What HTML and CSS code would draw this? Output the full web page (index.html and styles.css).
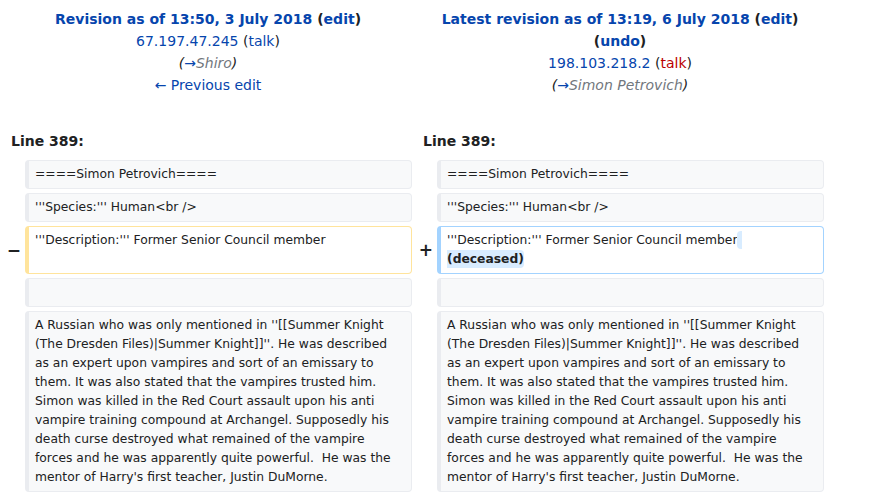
FILE: index.html
```html
<!DOCTYPE html>
<html lang="en">
<head>
<meta charset="utf-8">
<title>Difference between revisions</title>
<link rel="stylesheet" href="styles.css">
</head>
<body>
<table class="diff">
  <colgroup>
    <col class="col-marker">
    <col class="col-content">
    <col class="col-marker">
    <col class="col-content">
  </colgroup>
  <tr class="diff-title">
    <td colspan="2" class="diff-otitle">
      <div class="rev-line"><strong><a href="#">Revision as of 13:50, 3 July 2018</a> <span class="paren">(<a href="#">edit</a>)</span></strong></div>
      <div><a href="#">67.197.47.245</a> <span class="paren">(<a href="#">talk</a>)</span></div>
      <div class="comment">(<a href="#">→</a><span class="autocomment">Shiro</span>)</div>
      <div><a href="#">← Previous edit</a></div>
    </td>
    <td colspan="2" class="diff-ntitle">
      <div class="rev-line"><strong><a href="#">Latest revision as of 13:19, 6 July 2018</a> <span class="paren">(<a href="#">edit</a>)</span> <span class="paren">(<a href="#">undo</a>)</span></strong></div>
      <div><a href="#">198.103.218.2</a> <span class="paren">(<a href="#" class="new">talk</a>)</span></div>
      <div class="comment">(<a href="#">→</a><span class="autocomment">Simon Petrovich</span>)</div>
    </td>
  </tr>
  <tr>
    <td colspan="2" class="diff-lineno">Line 389:</td>
    <td colspan="2" class="diff-lineno">Line 389:</td>
  </tr>
  <tr>
    <td class="diff-marker"></td>
    <td class="diff-content diff-context"><div>====Simon Petrovich====</div></td>
    <td class="diff-marker"></td>
    <td class="diff-content diff-context"><div>====Simon Petrovich====</div></td>
  </tr>
  <tr>
    <td class="diff-marker"></td>
    <td class="diff-content diff-context"><div>'''Species:''' Human&lt;br /&gt;</div></td>
    <td class="diff-marker"></td>
    <td class="diff-content diff-context"><div>'''Species:''' Human&lt;br /&gt;</div></td>
  </tr>
  <tr>
    <td class="diff-marker">−</td>
    <td class="diff-content diff-deletedline"><div>'''Description:''' Former Senior Council member</div></td>
    <td class="diff-marker diff-marker-new">+</td>
    <td class="diff-content diff-addedline"><div>'''Description:''' Former Senior Council member<ins class="diffchange"> (deceased)</ins></div></td>
  </tr>
  <tr>
    <td class="diff-marker"></td>
    <td class="diff-content diff-context"><br></td>
    <td class="diff-marker"></td>
    <td class="diff-content diff-context"><br></td>
  </tr>
  <tr>
    <td class="diff-marker"></td>
    <td class="diff-content diff-context"><div>A Russian who was only mentioned in ''[[Summer Knight (The Dresden Files)|Summer Knight]]''. He was described as an expert upon vampires and sort of an emissary to them. It was also stated that the vampires trusted him. Simon was killed in the Red Court assault upon his anti vampire training compound at Archangel. Supposedly his death curse destroyed what remained of the vampire forces and he was apparently quite powerful.  He was the mentor of Harry's first teacher, Justin DuMorne.</div></td>
    <td class="diff-marker"></td>
    <td class="diff-content diff-context"><div>A Russian who was only mentioned in ''[[Summer Knight (The Dresden Files)|Summer Knight]]''. He was described as an expert upon vampires and sort of an emissary to them. It was also stated that the vampires trusted him. Simon was killed in the Red Court assault upon his anti vampire training compound at Archangel. Supposedly his death curse destroyed what remained of the vampire forces and he was apparently quite powerful.  He was the mentor of Harry's first teacher, Justin DuMorne.</div></td>
  </tr>
</table>
</body>
</html>
```

FILE: styles.css
```css
html, body {
  margin: 0;
  padding: 0;
  background: #ffffff;
}

body {
  font-family: "DejaVu Sans", sans-serif;
  color: #202122;
  font-size: 14px;
}

a {
  color: #0645ad;
  text-decoration: none;
}

a.new {
  color: #ba0000;
}

.diff {
  width: 828px;
  table-layout: fixed;
  border-collapse: separate;
  border-spacing: 4px;
  margin: 0;
}

.col-marker {
  width: 17px;
}

.col-content {
  width: 387px;
}

.diff td {
  padding: 0;
}

.diff .diff-otitle,
.diff .diff-ntitle {
  text-align: center;
  vertical-align: top;
  line-height: 22px;
  font-size: 14px;
  padding-top: 4px;
}

.paren {
  color: #202122;
}

.comment {
  font-style: italic;
  color: #202122;
}

.autocomment {
  color: #72777d;
}

.diff .diff-lineno {
  font-weight: bold;
  font-size: 14px;
  line-height: 22px;
  padding: 30px 0 4px 7px;
  text-align: left;
}

.diff .diff-marker {
  text-align: right;
  vertical-align: middle;
  font-weight: bold;
  font-size: 17px;
  line-height: 1;
  padding-right: 0;
}

.diff .diff-content {
  vertical-align: top;
  font-size: 12.32px;
  line-height: 19px;
  padding: 4px 12px 4px 6px;
  white-space: pre-wrap;
  overflow-wrap: break-word;
  border-style: solid;
  border-width: 1px 1px 1px 4px;
  border-radius: 4px;
}

.diff-context {
  background: #f8f9fa;
  border-color: #eaecf0;
  color: #202122;
}

.diff-deletedline {
  background: #ffffff;
  border-color: #ffe49c;
}

.diff-addedline {
  background: #ffffff;
  border-color: #a3d3ff;
}

.diffchange {
  text-decoration: none;
  font-weight: bold;
  background: #d8ecff;
  border-radius: 4px;
  padding: 2px 0;
}
```
